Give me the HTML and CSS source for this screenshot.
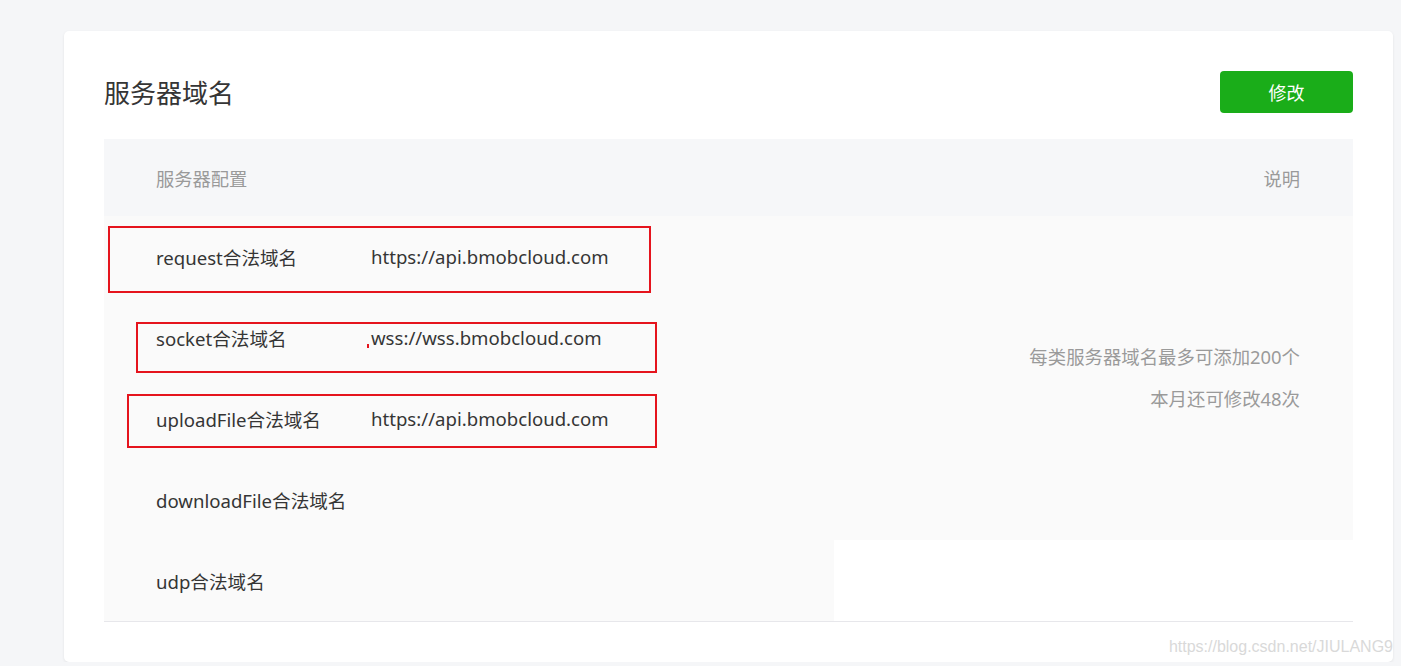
FILE: index.html
```html
<!DOCTYPE html>
<html>

<head>
    <title>服务器域名</title>
    <link rel="stylesheet" href="styles.css">
</head>

<body>
    <div class="page">
        <div class="card">
            <div class="card-head">
                <h2 class="card-title">服务器域名</h2>
                <button class="btn-primary">修改</button>
            </div>

            <table class="domain-table">
                <thead>
                    <tr>
                        <th class="col-config" colspan="2">服务器配置</th>
                        <th class="col-desc">说明</th>
                    </tr>
                </thead>
                <tbody>
                    <tr>
                        <td class="cell-label">request合法域名</td>
                        <td class="cell-value">https://api.bmobcloud.com</td>
                        <td class="cell-desc" rowspan="4">
                            <p>每类服务器域名最多可添加200个</p>
                            <p>本月还可修改48次</p>
                        </td>
                    </tr>
                    <tr>
                        <td class="cell-label">socket合法域名</td>
                        <td class="cell-value">wss://wss.bmobcloud.com</td>
                    </tr>
                    <tr>
                        <td class="cell-label">uploadFile合法域名</td>
                        <td class="cell-value">https://api.bmobcloud.com</td>
                    </tr>
                    <tr>
                        <td class="cell-label">downloadFile合法域名</td>
                        <td class="cell-value"></td>
                    </tr>
                    <tr>
                        <td class="cell-label">udp合法域名</td>
                        <td class="cell-value"></td>
                    </tr>
                </tbody>
            </table>

            <!-- red marks drawn over the screenshot -->
            <span class="mark mark-1"></span>
            <span class="mark mark-2"></span>
            <span class="mark mark-3"></span>
            <span class="mark-tick"></span>
        </div>
    </div>

    <span class="watermark">https://blog.csdn.net/JIULANG9</span>
</body>

</html>
```

FILE: styles.css
```css
body {
    background: #f5f6f8;
    color: #353535;
    font-family: "Noto Sans", "Noto Sans CJK SC", sans-serif;
    margin: 0;
    padding: 0;
    overflow: hidden;
}

.page {
    padding: 31px 8px 0 64px;
}

.card {
    background: white;
    border-radius: 5px;
    box-shadow: 0 1px 3px rgba(0, 0, 0, .08);
    height: 631px;
    padding: 40px 40px 0 40px;
    position: relative;
    box-sizing: border-box;
}

.card-head {
    align-items: center;
    display: flex;
    justify-content: space-between;
    margin-bottom: 26px;
}

.card-title {
    font-size: 26px;
    font-weight: normal;
    margin: 0;
}

.btn-primary {
    background: #1aad19;
    border: none;
    border-radius: 4px;
    color: white;
    cursor: pointer;
    font-family: inherit;
    font-size: 18px;
    height: 42px;
    width: 133px;
}

.domain-table {
    border-collapse: collapse;
    border-bottom: 1px solid #e7e7eb;
    font-size: 18.6px;
    width: 100%;
}

.domain-table th {
    background: #f6f7f9;
    color: #9a9a9a;
    font-size: 18.3px;
    font-weight: normal;
    height: 77px;
    padding: 0;
}

.col-config {
    padding-left: 52px !important;
    text-align: left;
}

.col-desc {
    padding-right: 53px !important;
    text-align: right;
}

.domain-table td {
    background: #fafafa;
    height: 81px;
    padding: 0;
}

.cell-label {
    padding-left: 52px !important;
    width: 215px;
}

.cell-value {
    width: 463px;
}

.cell-desc {
    color: #9a9a9a;
    font-size: 18.4px;
    padding-right: 53px !important;
    text-align: right;
}

.cell-desc p {
    line-height: 42px;
    margin: 0;
}

.mark {
    border: 2px solid #e5141d;
    position: absolute;
}

.mark-1 {
    height: 63px;
    left: 44px;
    top: 195px;
    width: 539px;
}

.mark-2 {
    height: 47px;
    left: 72px;
    top: 291px;
    width: 517px;
}

.mark-3 {
    height: 50px;
    left: 63px;
    top: 363px;
    width: 526px;
}

.mark-tick {
    background: #e5141d;
    height: 4px;
    left: 303px;
    position: absolute;
    top: 313px;
    width: 2px;
}

.watermark {
    color: #d9d9d9;
    font-family: "Liberation Sans", sans-serif;
    font-size: 16px;
    position: absolute;
    right: 8px;
    top: 638px;
}
```
